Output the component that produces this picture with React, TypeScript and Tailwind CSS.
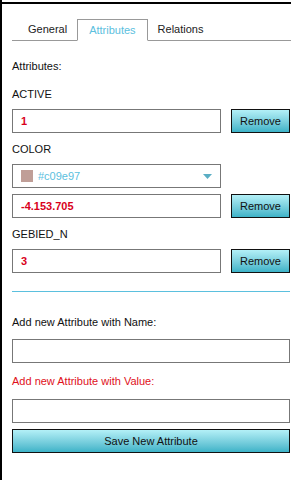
import React from 'react';

const font = { fontFamily: '"Liberation Sans", Arial, sans-serif' };

const RemoveButton: React.FC = () => (
  <button className="w-[59px] h-[24px] border border-[#111] bg-gradient-to-b from-[#b3f0f7] to-[#3cb3c8] text-[11px] text-[#111] leading-none">
    Remove
  </button>
);

const ValueRow: React.FC<{ value: string; className?: string }> = ({ value, className = '' }) => (
  <div className={`flex gap-[10px] ${className}`}>
    <div className="w-[209px] h-[24px] border border-[#777] flex items-center px-[8px]">
      <span className="text-[11px] font-bold text-[#d9001b]">{value}</span>
    </div>
    <RemoveButton />
  </div>
);

const App: React.FC = () => {
  const tabs = ['General', 'Attributes', 'Relations'];

  return (
    <div className="w-[291px] h-[480px] bg-white border-l-2 border-black overflow-hidden" style={font}>
      <div className="h-[2px] bg-black mt-[2px]"></div>

      <div className="pl-[10px] pr-[1px]">
        {/* Tabs */}
        <div className="flex border-b border-[#999] pl-[6px] mt-[15px] mr-[-1px]">
          {tabs.map((t) =>
            t === 'Attributes' ? (
              <div key={t} className="h-[22px] -mb-px px-[11px] border border-[#999] border-b-white bg-white flex items-center text-[11px] text-[#5bc0de]">
                {t}
              </div>
            ) : (
              <div key={t} className="h-[21px] px-[10px] flex items-center text-[11px] text-[#222]">
                {t}
              </div>
            )
          )}
        </div>

        <div className="text-[11px] leading-[13px] text-[#111] mt-[19px]">Attributes:</div>

        <div className="text-[11px] leading-[13px] text-[#111] mt-[15px]">ACTIVE</div>
        <ValueRow value="1" className="mt-[8px]" />

        <div className="text-[11px] leading-[13px] text-[#111] mt-[10px]">COLOR</div>
        <div className="mt-[8px] w-[209px] h-[24px] border border-[#777] flex items-center pl-[8px] pr-[8px]">
          <span className="w-[12px] h-[12px] bg-[#c09e97]"></span>
          <span className="ml-[5px] text-[11px] text-[#5bc0de]">#c09e97</span>
          <svg className="ml-auto" width="9" height="5" viewBox="0 0 9 5">
            <path d="M0 0 L9 0 L4.5 5 Z" fill="#5aaec4" />
          </svg>
        </div>
        <ValueRow value="-4.153.705" className="mt-[6px]" />

        <div className="text-[11px] leading-[13px] text-[#111] mt-[10px]">GEBIED_N</div>
        <ValueRow value="3" className="mt-[8px]" />

        <div className="h-px bg-[#5bc0de] mt-[18px]"></div>

        <div className="text-[11px] leading-[13px] text-[#111] mt-[24px]">Add new Attribute with Name:</div>
        <div className="mt-[10px] h-[24px] border border-[#777]"></div>

        <div className="text-[11px] leading-[13px] text-[#e0101a] mt-[12px]">Add new Attribute with Value:</div>
        <div className="mt-[11px] h-[24px] border border-[#777]"></div>

        <button className="mt-[6px] w-full h-[24px] border border-[#111] bg-gradient-to-b from-[#b3f0f7] to-[#3cb3c8] text-[11px] text-[#111] leading-none">
          Save New Attribute
        </button>
      </div>
    </div>
  );
};

export default App;
